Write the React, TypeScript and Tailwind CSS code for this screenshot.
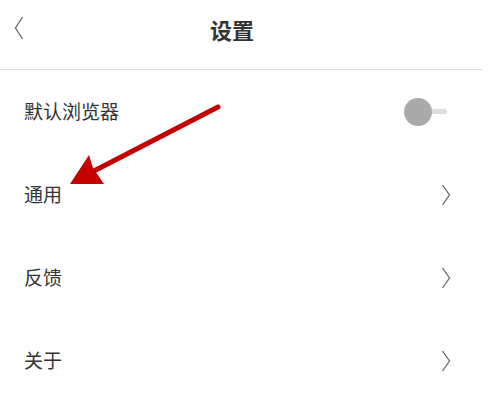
import { ChevronLeft, ChevronRight } from "lucide-react"

const rows = ["通用", "反馈", "关于"]

function Chevron() {
  return (
    <svg width="10" height="22" viewBox="0 0 10 22" className="text-[#666]">
      <path d="M1.5 1 L8.5 11 L1.5 21" fill="none" stroke="currentColor" strokeWidth="1.3" />
    </svg>
  )
}

export default function App() {
  return (
    <div
      className="relative w-[490px] h-[420px] bg-white text-[#333] overflow-hidden"
      style={{ fontFamily: '"Noto Sans CJK SC", "Noto Sans", sans-serif' }}
    >
      {/* Header */}
      <div className="relative h-[69px] flex items-center justify-center">
        <svg width="10" height="24" viewBox="0 0 10 24" className="absolute left-[14px] top-[16px] text-[#666]">
          <path d="M8.5 1 L1.5 12 L8.5 23" fill="none" stroke="currentColor" strokeWidth="1.3" />
        </svg>
        <span className="text-[22px] font-semibold leading-none -mt-[12px] ml-[-26px]">设置</span>
      </div>
      <div className="h-px bg-[#dcdcdc] mr-2" />

      {/* Rows */}
      <div className="flex flex-col">
        <div className="h-[83px] flex items-center justify-between pl-6 pr-[41px]">
          <span className="text-[19px]">默认浏览器</span>
          <div className="relative w-[45px] h-[28px] flex items-center">
            <div className="absolute left-[24px] w-[19px] h-[5px] rounded-full bg-[#dedede]" />
            <div className="absolute left-0 w-[28px] h-[28px] rounded-full bg-[#aaaaaa]" />
          </div>
        </div>
        {rows.map((r) => (
          <div key={r} className="h-[83px] flex items-center justify-between pl-6 pr-[39px]">
            <span className="text-[19px]">{r}</span>
            <Chevron />
          </div>
        ))}
      </div>

      {/* Annotation arrow */}
      <svg className="absolute left-0 top-0 pointer-events-none" width="490" height="420" viewBox="0 0 490 420">
        <line x1="218" y1="107" x2="90" y2="173" stroke="#c40000" strokeWidth="5" strokeLinecap="round" />
        <polygon points="70,184 89,155 93,168 104,184" fill="#c40000" />
      </svg>
    </div>
  )
}
